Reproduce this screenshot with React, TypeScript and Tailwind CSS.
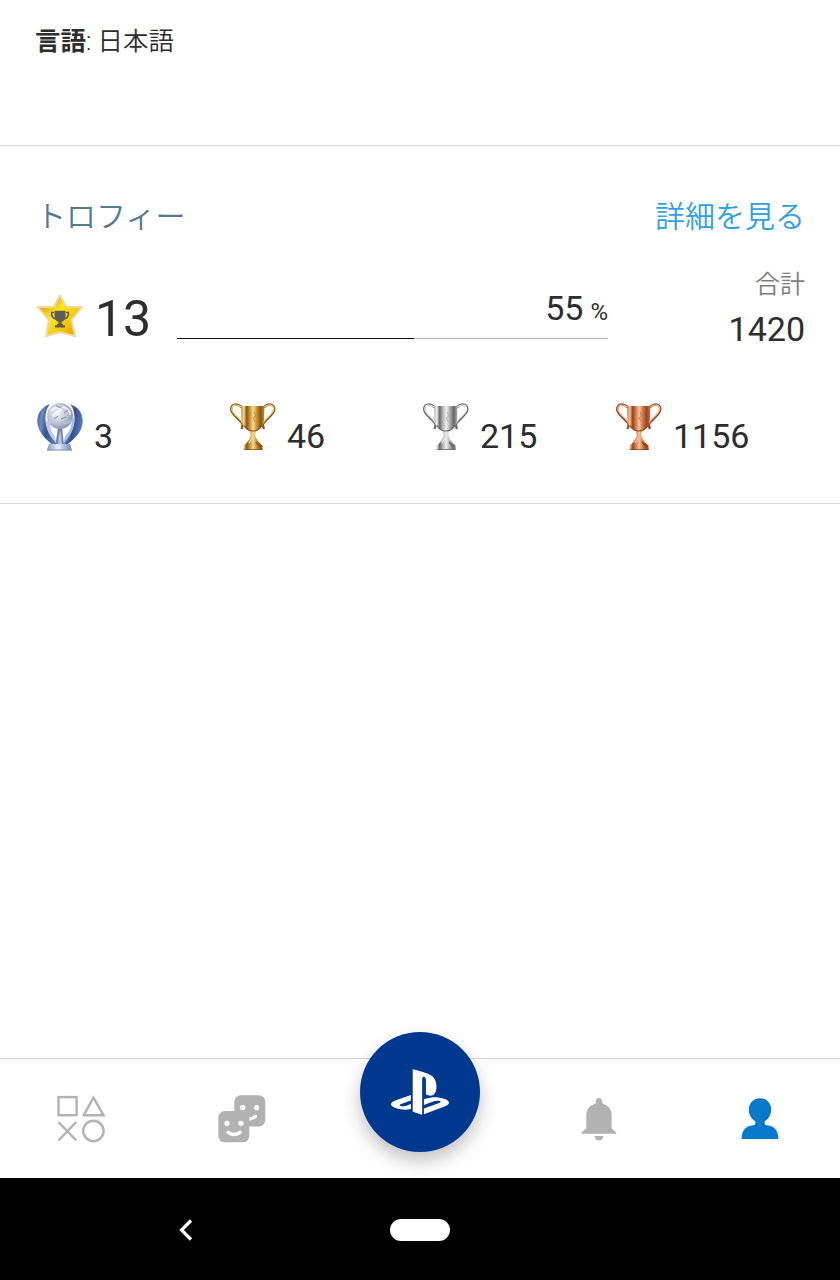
import React from 'react';
import { SiPlaystation } from 'react-icons/si';

const StarIcon = () => (
  <svg width="48" height="48" viewBox="0 0 48 48">
    <defs>
      <linearGradient id="star-fill" x1="0" y1="0" x2="1" y2="1">
        <stop offset="0.15" stopColor="#d9a91c" />
        <stop offset="0.4" stopColor="#ffe51f" />
        <stop offset="0.7" stopColor="#f0c808" />
        <stop offset="1" stopColor="#d99a12" />
      </linearGradient>
    </defs>
    <path
      d="M24 3 L30.2 14.2 L46.3 15 L35.6 28 L39.5 44.5 L24 40.5 L9.8 44.5 L12.6 28 L1.3 15 L17.8 14.2 Z"
      fill="#ecd891"
      stroke="#ecdba6"
      strokeWidth="1.5"
      strokeLinejoin="round"
    />
    <path d="M24 5.5 L29.5 15.7 L44 16.3 L34.3 28 L37.8 42.7 L24 39 L11.5 42.7 L14.2 28 L4 16.3 L18.5 15.7 Z" fill="url(#star-fill)" />
    <path d="M18 20.5 H15.7 C15 23.5 17 26.5 20 27 M30 20.5 H32.3 C33 23.5 31 26.5 28 27" fill="none" stroke="#5d5c5a" strokeWidth="1.6" />
    <path d="M18.5 18.8 H29.5 V24 C29.5 27.5 27.5 29.3 25.6 29.8 V32 H27 V33.3 H29 V35.5 H19 V33.3 H21 V32 H22.4 V29.8 C20.5 29.3 18.5 27.5 18.5 24 Z" fill="#5d5c5a" />
  </svg>
);

const PlatinumIcon = () => (
  <svg width="48" height="50" viewBox="0 0 48 50">
    <defs>
      <radialGradient id="globe" cx="0.4" cy="0.4" r="0.65">
        <stop offset="0" stopColor="#f2f4fa" />
        <stop offset="0.55" stopColor="#c3c8d6" />
        <stop offset="1" stopColor="#8990a9" />
      </radialGradient>
      <linearGradient id="wing" x1="0" y1="0" x2="1" y2="0.3">
        <stop offset="0" stopColor="#405b96" />
        <stop offset="0.3" stopColor="#6c8ac4" />
        <stop offset="0.6" stopColor="#34508e" />
        <stop offset="1" stopColor="#5a77b3" />
      </linearGradient>
      <linearGradient id="plate" x1="0" y1="0" x2="1" y2="0">
        <stop offset="0" stopColor="#8494be" />
        <stop offset="0.45" stopColor="#eef1fb" />
        <stop offset="0.65" stopColor="#b9c4e0" />
        <stop offset="1" stopColor="#7184b3" />
      </linearGradient>
    </defs>
    <path d="M22 25 H26 L28 43 H19.5 Z" fill="#6c80b0" />
    <path d="M23 28 L24 34 L25 28 L26 42 H22 Z" fill="#b4c2e1" />
    <circle cx="24" cy="14" r="13" fill="url(#globe)" />
    <path d="M15 9 C18 4 24 5 25 8 C22 10 19 10 17 14 M27 5 C31 6 34 9 34 13" fill="none" stroke="#fff" strokeWidth="2" opacity="0.7" />
    <path d="M20 4 L25 6 M28 11 L32 8 M18 17 L22 14 M25 17 L30 15" stroke="#828aa5" strokeWidth="1" />
    <path d="M14 2 C6 5 1 11 1.3 19.5 C1.7 30 9 36 15.5 42 H21 C15 35 10.5 28 9.6 20 C9 12 10.5 6.5 14 2 Z" fill="url(#wing)" />
    <path d="M34 2 C42 5 47 11 46.7 19.5 C46.3 30 39 36 32 42 H27 C33 35 37.5 28 38.4 20 C39 12 37.5 6.5 34 2 Z" fill="url(#wing)" />
    <path d="M18 14 C13 19 12.5 26 18.5 34 L20.5 41 C14 35 9.5 27 10 18 C12 21 14 18 18 14 Z" fill="#b9c9e8" />
    <path d="M38.5 15 C33 20 28 20.5 23 19 C27 23.5 32 22.5 36 20 C35 27 32 31 29 35 L27.5 41 C33 36 38.5 28 38.5 15 Z" fill="#a9bce1" />
    <path d="M13 42 H34 L36 48.5 H10.8 Z" fill="url(#plate)" />
    <path d="M11 48 H36" stroke="#8695bd" />
  </svg>
);

interface CupProps {
  id: string;
  dark: string;
  mid: string;
  light: string;
}

const CupIcon = ({ id, dark, mid, light }: CupProps) => (
  <svg width="48" height="50" viewBox="0 0 48 50">
    <defs>
      <linearGradient id={id} x1="0" y1="0" x2="1" y2="0">
        <stop offset="0" stopColor={mid} />
        <stop offset="0.12" stopColor={light} />
        <stop offset="0.24" stopColor={dark} />
        <stop offset="0.36" stopColor={mid} />
        <stop offset="0.52" stopColor={light} />
        <stop offset="0.68" stopColor={mid} />
        <stop offset="0.84" stopColor={dark} />
        <stop offset="1" stopColor={mid} />
      </linearGradient>
    </defs>
    <g fill="none" strokeLinecap="round">
      <path d="M12.5 5 C8 1.2 2.2 1.8 2.2 7.5 C2.5 13 11.5 17.5 13.5 22 C14 24 13 25.5 12.8 26" stroke={dark} strokeWidth="2.4" />
      <path d="M35 5 C39.5 1.2 45.3 1.8 45.3 7.5 C45 13 36 17.5 34 22 C33.5 24 34.5 25.5 34.7 26" stroke={dark} strokeWidth="2.4" />
      <path d="M12 4.8 C8 1.8 2.6 2.5 2.8 7.5 C3.2 12 11.5 16.5 13.3 21" stroke={light} strokeWidth="1.1" />
      <path d="M35.5 4.8 C39.5 1.8 44.9 2.5 44.7 7.5 C44.3 12 36 16.5 34.2 21" stroke={light} strokeWidth="1.1" />
    </g>
    <path
      d="M12 4 H35.5 C35 11 35.5 18 34.3 22 C32.8 26 29.5 28.5 26.5 29.5 L26.3 34 C27.5 38 30.5 41 33.5 43.5 L33.8 48 H14.5 L14.8 43.5 C18 41 20.5 38 21.7 34 L21.3 29.5 C18.5 28.5 15 26 13.3 22 C12 18 12.5 11 12 4 Z"
      fill={`url(#${id})`}
    />
    <path d="M15 23.5 C18 28.5 21 29 24 29 C27 29 30 28 32.5 23.5" fill="none" stroke={dark} strokeWidth="1.2" />
    <path d="M14.8 47.5 H33.6" stroke={dark} strokeWidth="0.8" />
    <path d="M25 10 L27 14 L24 16 L26.5 20" fill="none" stroke={mid} strokeWidth="0.9" />
    <path d="M23 36 L20 41" fill="none" stroke={light} strokeWidth="1.3" />
    <path d="M27 40 L31 45" fill="none" stroke={dark} strokeWidth="1.3" />
  </svg>
);

const ShapesIcon = () => (
  <svg width="50" height="50" viewBox="0 0 50 50" fill="none" stroke="#b2b2b2" strokeWidth="2.4">
    <rect x="2.5" y="3.1" width="18.1" height="18.1" />
    <path d="M37.4 3.6 L47.6 21.3 H27.7 Z" />
    <path d="M2.4 28 L20.3 46.5 M20.3 28 L2.4 46.5" />
    <circle cx="37.4" cy="37" r="10.2" />
  </svg>
);

const FriendsIcon = () => (
  <svg width="50" height="50" viewBox="0 0 50 50">
    <rect x="17.3" y="1.3" width="31" height="31.2" rx="6.5" fill="#b2b2b2" />
    <circle cx="25.7" cy="13.7" r="2.6" fill="#fff" />
    <circle cx="39.7" cy="13.7" r="2.6" fill="#fff" />
    <path d="M30 25 C34 25 36.5 24.5 38.5 22.3" fill="none" stroke="#fff" strokeWidth="3.2" strokeLinecap="round" />
    <rect x="1.3" y="17" width="31" height="31.3" rx="6.5" fill="#b2b2b2" />
    <circle cx="10" cy="29.3" r="2.6" fill="#fff" />
    <circle cx="24" cy="29.3" r="2.6" fill="#fff" />
    <path d="M11 38.3 C14 41.2 20 41.2 23 38.3" fill="none" stroke="#fff" strokeWidth="3.4" strokeLinecap="round" />
  </svg>
);

const BellIcon = () => (
  <svg width="36" height="44" viewBox="0 0 36 44" fill="#b2b2b2">
    <path d="M18 1 C20 1 21.3 2.6 21.3 4.5 V6.5 C27 8 30.7 12.5 30.7 18 V31.5 L35.2 35.2 V36.7 H0.6 V35.2 L5.3 31.5 V18 C5.3 12.5 9 8 14.7 6.5 V4.5 C14.7 2.6 16 1 18 1 Z" />
    <path d="M13.6 39 H22.4 C22 45 14 45 13.6 39 Z" />
  </svg>
);

const ProfileIcon = () => (
  <svg width="38" height="42" viewBox="0 0 38 42" fill="#0679ca">
    <path d="M19 0.2 C25.5 0.2 30.2 5 30.2 11.8 C30.2 16.8 27.5 21 23.7 23.2 V25 C23.7 26.5 24.6 27.2 26 27.3 C33.5 28 37.4 33 37.4 41 H0.6 C0.6 33 4.5 28 12 27.3 C13.4 27.2 14.3 26.5 14.3 25 V23.2 C10.5 21 7.8 16.8 7.8 11.8 C7.8 5 12.5 0.2 19 0.2 Z" />
  </svg>
);

const trophies = [
  { name: 'platinum', count: 3, icon: <PlatinumIcon /> },
  { name: 'gold', count: 46, icon: <CupIcon id="cup-gold" dark="#875819" mid="#c48c30" light="#f5da92" /> },
  { name: 'silver', count: 215, icon: <CupIcon id="cup-silver" dark="#686868" mid="#adadad" light="#f0f0f0" /> },
  { name: 'bronze', count: 1156, icon: <CupIcon id="cup-bronze" dark="#98431f" mid="#cb7548" light="#f8c39b" /> },
];

const App = () => {
  const progress = 55;

  return (
    <div className="flex h-[1280px] w-[840px] flex-col overflow-hidden bg-white font-[Roboto,'Noto_Sans_CJK_JP',sans-serif] text-[#2d2d2d]">
      {/* Language */}
      <section className="h-[146px] border-b border-[#d9d9d9] px-[35px] pt-[21px]">
        <p className="text-[25.5px] font-[350] leading-10">
          <span className="font-bold">言語</span>: 日本語
        </p>
      </section>

      {/* Trophies */}
      <section className="h-[358px] border-b border-[#d9d9d9] pl-9 pr-[35px] pt-[47px]">
        <div className="flex h-12 items-center justify-between text-[30px] font-[350] leading-[48px]">
          <h2 className="font-[350] text-[#527a94]">トロフィー</h2>
          <a href="#" className="text-[#2f9fe6]">詳細を見る</a>
        </div>

        <div className="flex h-[125px] pt-5">
          <div className="flex h-[110px] w-[141px] items-center">
            <StarIcon />
            <span className="ml-[11px] pt-[5px] text-[50px] leading-[60px]">13</span>
          </div>
          <div className="w-[431px] pt-[25px]">
            <div className="flex h-[52px] items-baseline justify-end">
              <span className="text-[34px] leading-[44px]">55</span>
              <span className="ml-[7px] text-[24px]">%</span>
            </div>
            <div className="h-px bg-[#b8b8b8]">
              <div className="h-full bg-[#111]" style={{ width: `${progress}%` }} />
            </div>
          </div>
          <div className="flex-1 pt-1 text-right">
            <p className="text-[25px] font-[350] leading-10 text-[#7d7d7d]">合計</p>
            <p className="pt-px text-[34px] leading-[46px]">1420</p>
          </div>
        </div>

        <ul className="-mr-1 mt-9 grid w-[772px] grid-cols-4">
          {trophies.map((trophy) => (
            <li key={trophy.name} className="flex h-[50px] items-start">
              {trophy.icon}
              <span className="ml-[10px] pt-3 text-[34px] leading-[44px]">{trophy.count}</span>
            </li>
          ))}
        </ul>
      </section>

      <main className="flex-1" />

      {/* Tab bar */}
      <nav className="grid h-[120px] grid-cols-[161px_161px_196px_161px_161px] border-t border-[#d4d4d4]">
        <button className="flex items-center justify-center"><ShapesIcon /></button>
        <button className="flex items-center justify-center"><FriendsIcon /></button>
        <div className="flex justify-center">
          <button className="-mt-[27px] flex h-[120px] w-[120px] items-center justify-center rounded-full bg-[#00378f] text-white shadow-[0_9px_18px_rgba(0,0,0,0.24)]">
            <SiPlaystation size={58} />
          </button>
        </div>
        <button className="flex items-center justify-center"><BellIcon /></button>
        <button className="flex items-center justify-center"><ProfileIcon /></button>
      </nav>

      {/* System navigation */}
      <div className="grid h-[102px] grid-cols-[372px_96px_372px] items-center justify-items-center bg-black">
        <svg width="16" height="24" viewBox="0 0 16 24" className="mt-0.5">
          <path d="M13 2.5 L3.5 12 L13 21.5" fill="none" stroke="#fff" strokeWidth="3.2" />
        </svg>
        <div className="mt-0.5 h-[22px] w-[60px] rounded-full bg-white" />
      </div>
    </div>
  );
};

export default App;
